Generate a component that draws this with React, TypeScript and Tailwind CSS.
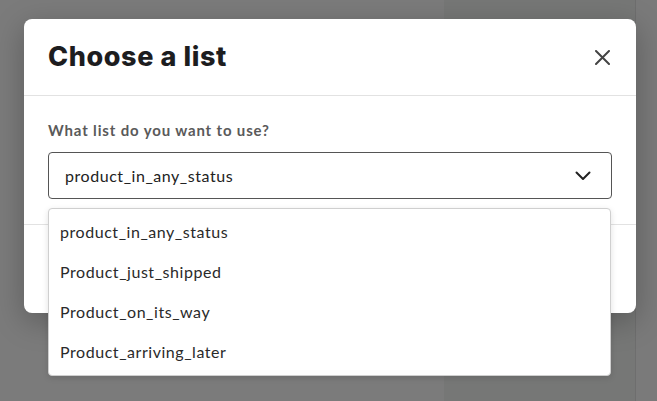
import React from "react";

const options = [
  "product_in_any_status",
  "Product_just_shipped",
  "Product_on_its_way",
  "Product_arriving_later",
];

export default function App() {
  return (
    <div className="relative w-[657px] h-[401px] overflow-hidden" style={{ fontFamily: "Lato, 'Noto Sans', sans-serif" }}>
      {/* page behind the overlay */}
      <div className="flex h-full w-full">
        <div className="w-[444px] h-full bg-[#7b7b7b]" />
        <div className="w-[191px] h-full bg-[#767776]" />
        <div className="flex-1 h-full bg-[#7a7a7a] border-l border-[#6e6e6e]" />
      </div>

      {/* modal */}
      <div className="absolute left-[24px] top-[19px] w-[612px] rounded-lg bg-white shadow-[0_8px_30px_rgba(0,0,0,0.25)]">
        <div className="flex h-[77px] items-center justify-between px-6 border-b border-[#e2e2e2]">
          <h2
            className="text-[27px] font-extrabold text-[#1d1d1f] tracking-[0.6px]"
            style={{ fontFamily: "Inter, sans-serif" }}
          >
            Choose a list
          </h2>
          <button className="flex h-5 w-5 items-center justify-center text-[#444]">
            <svg width="15" height="15" viewBox="0 0 15 15" fill="none" stroke="currentColor" strokeWidth="2" strokeLinecap="round">
              <path d="M1 1L14 14M14 1L1 14" />
            </svg>
          </button>
        </div>
        <div className="px-6 pt-6 pb-[25px] border-b border-[#e2e2e2]">
          <div className="text-[15px] leading-5 font-bold text-[#5a5a5a] tracking-[0.85px]">What list do you want to use?</div>
          <div className="relative mt-3">
            <div className="flex h-[47px] items-center justify-between rounded border border-[#555] pl-4 pr-5 text-[16px] text-[#222] tracking-[0.55px]">
              <span>product_in_any_status</span>
              <svg width="16" height="10" viewBox="0 0 16 10" fill="none" stroke="#222" strokeWidth="2" strokeLinecap="round" strokeLinejoin="round">
                <path d="M1.5 1.5L8 8L14.5 1.5" />
              </svg>
            </div>
            <div className="absolute left-0 right-[1px] top-[56px] z-10 rounded border border-[#cfcfcf] bg-white py-[3px] shadow-[0_2px_6px_rgba(0,0,0,0.12)]">
              {options.map((o) => (
                <div key={o} className="flex h-10 items-center px-[11px] text-[16px] text-[#2a2a2a] tracking-[0.55px]">
                  {o}
                </div>
              ))}
            </div>
          </div>
        </div>
        <div className="h-[88px]" />
      </div>
    </div>
  );
}
